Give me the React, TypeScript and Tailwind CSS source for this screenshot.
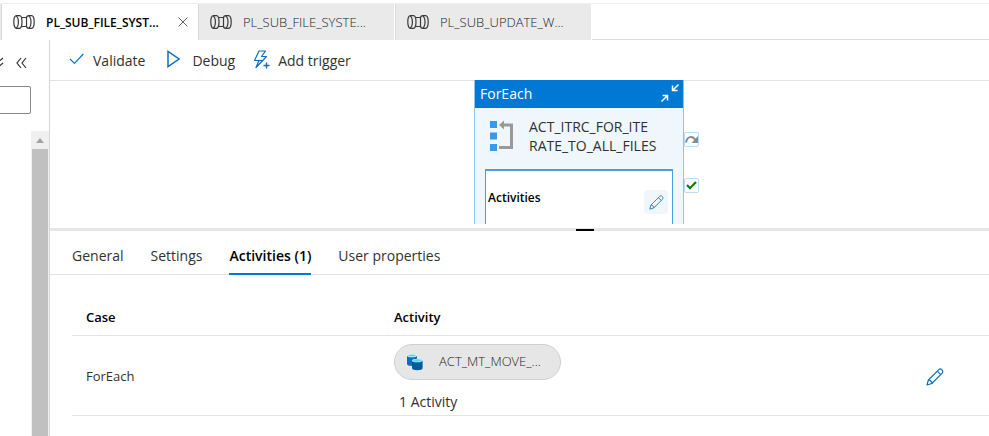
import React from 'react';

type TabProps = { label: string; active?: boolean };

function PipelineIcon() {
  return (
    <svg width="22" height="14" viewBox="0 0 22 14" fill="none" stroke="#3b3a39" strokeWidth="1.2" className="shrink-0" aria-hidden="true">
      <path d="M3.500 .7C1.800.7.8 3.500.8 7s1 6.300 2.700 6.300M3.500.7h3C8.200.7 9 3.500 9 7s-.8 6.300-2.500 6.300h-3" />
      <path d="M3.200 1c1.600 1 2.200 3.200 2.200 6s-.6 5-2.200 6" />
      <path d="M9 2.500h4.500M8.500 11.500h5" />
      <path d="M16 .7c-1.400 0-2.500 1-2.500 2.300v8c0 1.300 1.100 2.300 2.500 2.300h2.500c1.800 0 2.700-2.800 2.700-6.300S20.300.7 18.500.7H16Z" />
      <path d="M15.800 1c1.600 1 2.200 3.200 2.200 6s-.6 5-2.200 6" />
    </svg>
  );
}

function PencilIcon({ size, color }: { size: number; color: string }) {
  return (
    <svg width={size} height={size} viewBox="0 0 18 18" fill="none" stroke={color} strokeWidth="1.2" strokeLinejoin="round" aria-hidden="true">
      <path d="M1 17l1.400-5L12.600 1.800c1-1 2.400-1 3.400 0s1 2.500 0 3.500L5.800 15.500 1 17Z" />
      <path d="M11.300 3.200l3.400 3.400M2.400 12c1.600 0 3.400 1.600 3.400 3.500" />
    </svg>
  );
}

function PipelineTab({ label, active }: TabProps) {
  return (
    <div
      className={
        active
          ? 'flex w-[197px] items-center border-l border-[#dcdcdc] bg-white pl-[11px] text-black'
          : 'flex w-[197px] items-center border-r border-l border-r-white border-l-[#dcdcdc] bg-[#eaeaea] pl-[11px] text-[#201f1e]'
      }
    >
      <button role="tab" aria-selected={!!active} className="flex items-center gap-[11px]">
        <PipelineIcon />
        <span className={active ? 'pt-px text-[12px] font-semibold' : 'pt-px text-[13px] font-light'}>{label}</span>
      </button>
      {active && (
        <button aria-label="Close tab" className="mr-[9px] ml-auto">
          <svg width="12" height="12" viewBox="0 0 12 12" stroke="#605e5c" strokeWidth="1" aria-hidden="true">
            <path d="M1.500 1.500l9 9M10.500 1.500l-9 9" />
          </svg>
        </button>
      )}
    </div>
  );
}

function Sidebar() {
  return (
    <aside className="flex w-[50px] shrink-0 flex-col overflow-hidden border-r border-[#d6d6d6]">
      <div className="flex h-[46px] items-center">
        <button aria-label="Expand all" className="-ml-2">
          <svg width="12" height="14" viewBox="0 0 12 14" fill="none" stroke="#323130" strokeWidth="1.200" aria-hidden="true">
            <path d="M1 2l5 4 5-4M1 7l5 4 5-4" />
          </svg>
        </button>
        <button aria-label="Collapse pane" className="ml-3">
          <svg width="11" height="12" viewBox="0 0 11 12" fill="none" stroke="#323130" strokeWidth="1.200" aria-hidden="true">
            <path d="M5 1L1 6l4 5M10 1L6 6l4 5" />
          </svg>
        </button>
      </div>
      <input aria-label="Filter resources" className="-ml-2 h-[28px] w-[39px] shrink-0 rounded-xs border border-[#8a8886] bg-white" />
      <div className="mt-[17px] ml-auto flex w-[18px] flex-1 flex-col bg-[#f0f0f0] px-px">
        <div className="flex h-[18px] items-center justify-center">
          <svg width="8" height="5" viewBox="0 0 8 5" fill="#a3a3a3" aria-hidden="true">
            <path d="M0 5l4-5 4 5Z" />
          </svg>
        </div>
        <div className="flex-1 bg-[#c0c0c0]" />
      </div>
    </aside>
  );
}

function Toolbar() {
  return (
    <div className="flex h-[41px] items-center border-b border-[#e3e3e3] pl-[19px] text-[14px]">
      <button className="flex items-center gap-[9px]">
        <svg width="15" height="14" viewBox="0 0 15 14" fill="none" stroke="#0078d4" strokeWidth="1.200" aria-hidden="true">
          <path d="M1 6l4.500 4.500L14.300 1" />
        </svg>
        Validate
      </button>
      <button className="ml-[22px] flex items-center gap-3">
        <svg width="13" height="20" viewBox="0 0 13 20" fill="none" stroke="#0f6cbd" strokeWidth="1.500" aria-hidden="true">
          <path d="M1 1.500v15L12 9 1 1.500Z" />
        </svg>
        Debug
      </button>
      <button className="ml-[18px] flex items-center gap-2">
        <svg width="17" height="20" viewBox="0 0 17 20" fill="none" stroke="#0f6cbd" strokeWidth="1.200" strokeLinejoin="round" aria-hidden="true">
          <path d="M6 1h6.500L8.500 6.500h5L3 17.500l3-7H1.500L6 1Z" />
          <path d="M6 10.500h3.500" />
          <path d="M13.500 12.500v6M10.500 15.500h6" strokeWidth="1.400" />
        </svg>
        Add trigger
      </button>
    </div>
  );
}

function ForEachNode() {
  return (
    <div className="absolute top-0 left-[424px] flex items-start">
      <div className="w-[210px] border-x border-[#8ec3ee] bg-[#eff6fc]">
        <div className="flex h-7 items-center justify-between bg-[#0078d4] pr-[3px] pl-[5px] text-[14px] text-white">
          <span className="pb-0.5">ForEach</span>
          <button aria-label="Collapse activity" className="pb-0.5">
            <svg width="20" height="20" viewBox="0 0 20 20" fill="none" stroke="#fff" strokeWidth="1.500" aria-hidden="true">
              <path d="M18.500 1.500l-6 6M12.500 2.500v5h5" />
              <path d="M1.500 18.500l6-6M2.500 12.500h5v5" />
            </svg>
          </button>
        </div>
        <div className="flex h-[61px] items-start gap-[15px] pt-[9px] pl-[15px]">
          <svg width="24" height="32" viewBox="0 0 24 32" className="mt-[3px] shrink-0" aria-hidden="true">
            <g fill="#3999e6">
              <path d="M0 1h7v7H0zM0 12.500h7v7H0zM0 24h7v7H0z" />
            </g>
            <path d="M12 5h9.500v22.500H9" fill="none" stroke="#999" strokeWidth="3" />
            <path d="M9 5l5-4.500v9Z" fill="#999" />
          </svg>
          <p className="text-[14px] leading-[19px] whitespace-nowrap">
            ACT_ITRC_FOR_ITE
            <br />
            RATE_TO_ALL_FILES
          </p>
        </div>
        <div className="mx-[10px] flex h-[55px] items-end justify-between border-x border-t-2 border-[#4a9fe0] bg-white pr-1 pb-[10px] pl-[2px]">
          <span className="pb-[7px] text-[12px] font-semibold text-black">Activities</span>
          <button aria-label="Edit activities" className="flex size-6 items-center justify-center rounded-sm bg-[#eff6fc]">
            <PencilIcon size={15} color="#2b88d8" />
          </button>
        </div>
      </div>
      <div className="flex flex-col gap-[31px] pt-[52px]">
        <button aria-label="On skip" className="flex size-[15px] items-center justify-center rounded-xs border border-[#b9dcf7] bg-white">
          <svg width="13" height="9" viewBox="0 0 13 9" fill="none" stroke="#8a8a8a" strokeWidth="2" aria-hidden="true" className="shrink-0">
            <path d="M1 7.500C2 1 7.500.5 10.500 5" />
            <path d="M13 1v7H6.500Z" fill="#8a8a8a" stroke="none" />
          </svg>
        </button>
        <button aria-label="On success" className="flex size-[15px] items-center justify-center rounded-xs border border-[#b9dcf7] bg-white">
          <svg width="11" height="9" viewBox="0 0 11 9" fill="none" stroke="#107c10" strokeWidth="2.200" aria-hidden="true">
            <path d="M1 4l3 3.200L10 1" />
          </svg>
        </button>
      </div>
    </div>
  );
}

const panelTabs = ['General', 'Settings', 'Activities (1)', 'User properties'];

function DetailsPanel() {
  return (
    <section className="text-[14px]">
      <div role="tablist" className="flex h-11 gap-[27px] border-b border-[#e3e3e3] pl-[22px]">
        {panelTabs.map((tab) =>
          tab === 'Activities (1)' ? (
            <button key={tab} role="tab" aria-selected className="-mb-px border-b-2 border-[#0078d4] pt-[9px] pb-[2px] font-semibold text-black">
              {tab}
            </button>
          ) : (
            <button key={tab} role="tab" aria-selected={false} className="pt-[9px] pb-[3px]">
              {tab}
            </button>
          ),
        )}
      </div>
      <div className="pt-6 pl-[22px]">
        <table className="w-full table-fixed text-left">
          <thead>
            <tr className="h-9 border-b border-[#e3e3e3] text-[13px] text-black">
              <th className="w-[308px] pt-px pl-[14px] font-semibold">Case</th>
              <th className="pt-px pl-[14px] font-semibold">Activity</th>
              <th className="w-[63px]" aria-label="Actions" />
            </tr>
          </thead>
          <tbody>
            <tr className="h-20 border-b border-[#e3e3e3]">
              <td className="pt-1 pl-[14px] text-[13px]">ForEach</td>
              <td className="pl-[14px] align-top">
                <button className="mt-2 flex h-9 w-[167px] items-center gap-4 rounded-full border border-[#cfcfcf] bg-[#e6e6e6] pl-3 text-[13px] font-light text-[#201f1e]">
                  <svg width="16" height="18" viewBox="0 0 16 18" className="shrink-0" aria-hidden="true">
                    <path d="M0 2.500v8.500c0 1 2 2 5 2s5-1 5-2V2.500Z" fill="#0f6cbd" />
                    <ellipse cx="5" cy="2.500" rx="5" ry="1.800" fill="#e6f8fc" />
                    <ellipse cx="5" cy="2.500" rx="3.800" ry="1.100" fill="#50d9f0" />
                    <path d="M5 7.500V15c0 1.300 2.300 2.300 5.300 2.300s5.300-1 5.300-2.300V7.500Z" fill="#005ba1" />
                    <ellipse cx="10.300" cy="7.500" rx="5.300" ry="1.800" fill="#c8eef8" />
                    <ellipse cx="10.300" cy="7.500" rx="4.200" ry="1.200" fill="#50d9f0" />
                  </svg>
                  ACT_MT_MOVE_...
                </button>
                <p className="pt-3 pl-[5px] leading-5">1 Activity</p>
              </td>
              <td className="pt-1">
                <button aria-label="Edit ForEach case" className="block">
                  <PencilIcon size={18} color="#0f6cbd" />
                </button>
              </td>
            </tr>
          </tbody>
        </table>
      </div>
    </section>
  );
}

export default function App() {
  return (
    <div className="flex min-h-screen flex-col bg-white font-['Open_Sans','Noto_Sans',sans-serif] text-[#323130]">
      <header role="tablist" className="mt-[3px] flex h-[37px] border-t border-[#efefef]">
        <div className="w-px bg-[#eaeaea]" />
        <PipelineTab label="PL_SUB_FILE_SYST..." active />
        <PipelineTab label="PL_SUB_FILE_SYSTE..." />
        <PipelineTab label="PL_SUB_UPDATE_W..." />
        <div className="flex-1 border-b border-[#dcdcdc]" />
      </header>
      <div className="flex flex-1">
        <Sidebar />
        <main className="min-w-0 flex-1">
          <Toolbar />
          <div className="relative -mt-px h-36 overflow-hidden">
            <ForEachNode />
          </div>
          <div className="mt-1 flex h-[3px] items-center bg-[#e6e6e6] pl-[526px]">
            <div className="h-[2px] w-[18px] bg-black" />
          </div>
          <DetailsPanel />
        </main>
      </div>
    </div>
  );
}
